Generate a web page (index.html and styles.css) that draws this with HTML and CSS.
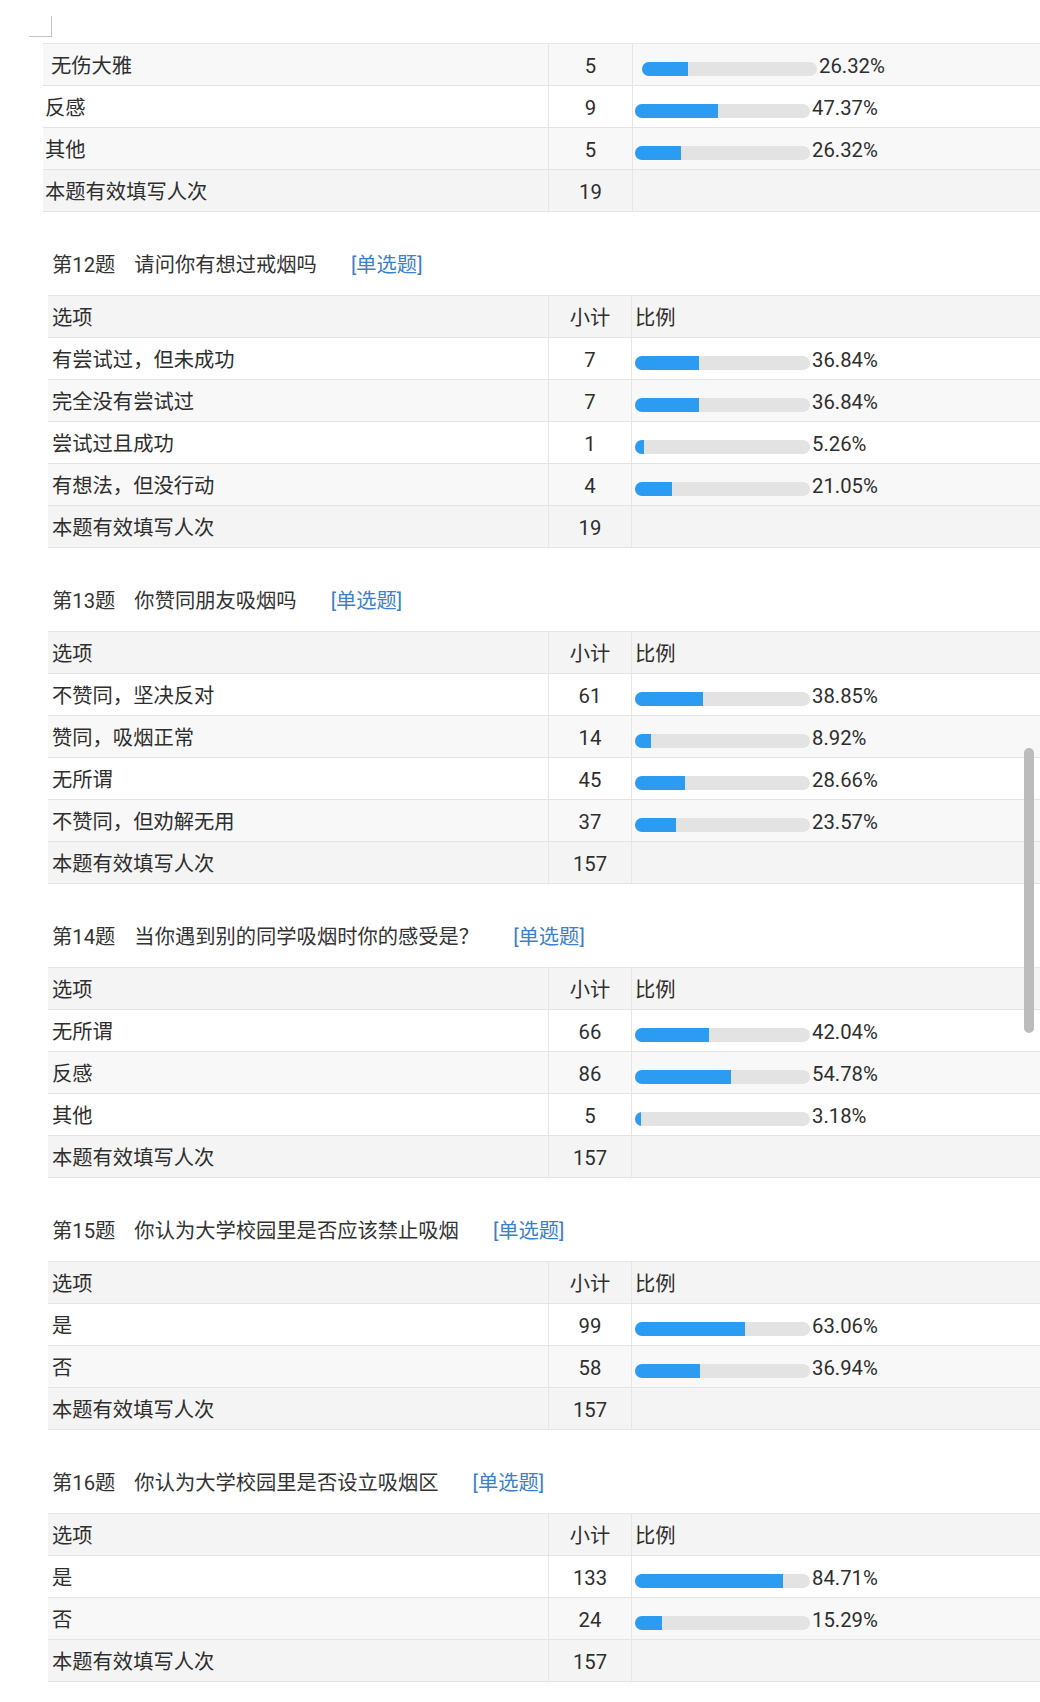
FILE: index.html
```html
<!DOCTYPE html>
<html lang="zh-CN">
<head>
<meta charset="utf-8">
<title>统计结果</title>
<link rel="stylesheet" href="styles.css">
</head>
<body>
<div class="page">
  <div class="corner"></div>

  <div class="stat stat--lead">
    <div class="row row--alt">
      <div class="cell opt opt--shift">无伤大雅</div>
      <div class="cell num">5</div>
      <div class="cell ratio ratio--shift"><span class="bar"><span class="fill" style="width:26.32%"></span></span><span class="pct">26.32%</span></div>
    </div>
    <div class="row">
      <div class="cell opt">反感</div>
      <div class="cell num">9</div>
      <div class="cell ratio"><span class="bar"><span class="fill" style="width:47.37%"></span></span><span class="pct">47.37%</span></div>
    </div>
    <div class="row row--alt">
      <div class="cell opt">其他</div>
      <div class="cell num">5</div>
      <div class="cell ratio"><span class="bar"><span class="fill" style="width:26.32%"></span></span><span class="pct">26.32%</span></div>
    </div>
    <div class="row row--total">
      <div class="cell opt">本题有效填写人次</div>
      <div class="cell num">19</div>
      <div class="cell ratio"></div>
    </div>
  </div>

  <section class="question">
    <h2 class="q-title"><span class="q-no">第12题</span><span class="q-text">请问你有想过戒烟吗</span><span class="q-tag">[单选题]</span></h2>
    <div class="stat">
      <div class="row row--head"><div class="cell opt">选项</div><div class="cell num">小计</div><div class="cell ratio">比例</div></div>
      <div class="row"><div class="cell opt">有尝试过，但未成功</div><div class="cell num">7</div><div class="cell ratio"><span class="bar"><span class="fill" style="width:36.84%"></span></span><span class="pct">36.84%</span></div></div>
      <div class="row row--alt"><div class="cell opt">完全没有尝试过</div><div class="cell num">7</div><div class="cell ratio"><span class="bar"><span class="fill" style="width:36.84%"></span></span><span class="pct">36.84%</span></div></div>
      <div class="row"><div class="cell opt">尝试过且成功</div><div class="cell num">1</div><div class="cell ratio"><span class="bar"><span class="fill" style="width:5.26%"></span></span><span class="pct">5.26%</span></div></div>
      <div class="row row--alt"><div class="cell opt">有想法，但没行动</div><div class="cell num">4</div><div class="cell ratio"><span class="bar"><span class="fill" style="width:21.05%"></span></span><span class="pct">21.05%</span></div></div>
      <div class="row row--total"><div class="cell opt">本题有效填写人次</div><div class="cell num">19</div><div class="cell ratio"></div></div>
    </div>
  </section>

  <section class="question">
    <h2 class="q-title"><span class="q-no">第13题</span><span class="q-text">你赞同朋友吸烟吗</span><span class="q-tag">[单选题]</span></h2>
    <div class="stat">
      <div class="row row--head"><div class="cell opt">选项</div><div class="cell num">小计</div><div class="cell ratio">比例</div></div>
      <div class="row"><div class="cell opt">不赞同，坚决反对</div><div class="cell num">61</div><div class="cell ratio"><span class="bar"><span class="fill" style="width:38.85%"></span></span><span class="pct">38.85%</span></div></div>
      <div class="row row--alt"><div class="cell opt">赞同，吸烟正常</div><div class="cell num">14</div><div class="cell ratio"><span class="bar"><span class="fill" style="width:8.92%"></span></span><span class="pct">8.92%</span></div></div>
      <div class="row"><div class="cell opt">无所谓</div><div class="cell num">45</div><div class="cell ratio"><span class="bar"><span class="fill" style="width:28.66%"></span></span><span class="pct">28.66%</span></div></div>
      <div class="row row--alt"><div class="cell opt">不赞同，但劝解无用</div><div class="cell num">37</div><div class="cell ratio"><span class="bar"><span class="fill" style="width:23.57%"></span></span><span class="pct">23.57%</span></div></div>
      <div class="row row--total"><div class="cell opt">本题有效填写人次</div><div class="cell num">157</div><div class="cell ratio"></div></div>
    </div>
  </section>

  <section class="question">
    <h2 class="q-title"><span class="q-no">第14题</span><span class="q-text">当你遇到别的同学吸烟时你的感受是？</span><span class="q-tag">[单选题]</span></h2>
    <div class="stat">
      <div class="row row--head"><div class="cell opt">选项</div><div class="cell num">小计</div><div class="cell ratio">比例</div></div>
      <div class="row"><div class="cell opt">无所谓</div><div class="cell num">66</div><div class="cell ratio"><span class="bar"><span class="fill" style="width:42.04%"></span></span><span class="pct">42.04%</span></div></div>
      <div class="row row--alt"><div class="cell opt">反感</div><div class="cell num">86</div><div class="cell ratio"><span class="bar"><span class="fill" style="width:54.78%"></span></span><span class="pct">54.78%</span></div></div>
      <div class="row"><div class="cell opt">其他</div><div class="cell num">5</div><div class="cell ratio"><span class="bar"><span class="fill" style="width:3.18%"></span></span><span class="pct">3.18%</span></div></div>
      <div class="row row--total"><div class="cell opt">本题有效填写人次</div><div class="cell num">157</div><div class="cell ratio"></div></div>
    </div>
  </section>

  <section class="question">
    <h2 class="q-title"><span class="q-no">第15题</span><span class="q-text">你认为大学校园里是否应该禁止吸烟</span><span class="q-tag">[单选题]</span></h2>
    <div class="stat">
      <div class="row row--head"><div class="cell opt">选项</div><div class="cell num">小计</div><div class="cell ratio">比例</div></div>
      <div class="row"><div class="cell opt">是</div><div class="cell num">99</div><div class="cell ratio"><span class="bar"><span class="fill" style="width:63.06%"></span></span><span class="pct">63.06%</span></div></div>
      <div class="row row--alt"><div class="cell opt">否</div><div class="cell num">58</div><div class="cell ratio"><span class="bar"><span class="fill" style="width:36.94%"></span></span><span class="pct">36.94%</span></div></div>
      <div class="row row--total"><div class="cell opt">本题有效填写人次</div><div class="cell num">157</div><div class="cell ratio"></div></div>
    </div>
  </section>

  <section class="question">
    <h2 class="q-title"><span class="q-no">第16题</span><span class="q-text">你认为大学校园里是否设立吸烟区</span><span class="q-tag">[单选题]</span></h2>
    <div class="stat">
      <div class="row row--head"><div class="cell opt">选项</div><div class="cell num">小计</div><div class="cell ratio">比例</div></div>
      <div class="row"><div class="cell opt">是</div><div class="cell num">133</div><div class="cell ratio"><span class="bar"><span class="fill" style="width:84.71%"></span></span><span class="pct">84.71%</span></div></div>
      <div class="row row--alt"><div class="cell opt">否</div><div class="cell num">24</div><div class="cell ratio"><span class="bar"><span class="fill" style="width:15.29%"></span></span><span class="pct">15.29%</span></div></div>
      <div class="row row--total"><div class="cell opt">本题有效填写人次</div><div class="cell num">157</div><div class="cell ratio"></div></div>
    </div>
  </section>

  <div class="scrollbar"></div>
</div>
</body>
</html>
```

FILE: styles.css
```css
html, body {
  margin: 0;
  padding: 0;
  background: #ffffff;
}

body {
  font-family: Roboto, "Noto Sans CJK SC", "Noto Sans", sans-serif;
  font-size: 20.3px;
  color: #2e2e2e;
  overflow: hidden;
}

.page {
  position: relative;
  padding-top: 16px;
  padding-bottom: 20px;
}

.corner {
  margin-left: 29px;
  width: 22px;
  height: 20px;
  border-right: 1px solid #c4c4c4;
  border-bottom: 1px solid #c4c4c4;
}

.stat {
  margin-left: 48px;
  border-top: 1px solid #e6e6e6;
}

.stat--lead {
  margin-left: 43px;
  margin-top: 6px;
}

.row {
  display: grid;
  grid-template-columns: 501px 83px 1fr;
  height: 42px;
  box-sizing: border-box;
  border-bottom: 1px solid #e4e4e4;
  background: #ffffff;
}

.stat--lead .row {
  grid-template-columns: 506px 84px 1fr;
}

.row--alt {
  background: #f8f8f8;
}

.row--head,
.row--total {
  background: #f4f4f4;
}

.cell {
  display: flex;
  align-items: center;
  min-width: 0;
  white-space: nowrap;
  line-height: 24px;
  padding-top: 2px;
}

.opt {
  padding-left: 4px;
  border-right: 1px solid #e6e6e6;
}

.stat--lead .opt {
  padding-left: 2px;
}

.stat--lead .opt--shift {
  padding-left: 8px;
}

.num {
  justify-content: center;
  border-right: 1px solid #e6e6e6;
}

.ratio {
  padding-left: 3px;
}

.stat--lead .ratio {
  padding-left: 2px;
}

.stat--lead .ratio--shift {
  padding-left: 9px;
}

.bar {
  display: block;
  flex: 0 0 175px;
  width: 175px;
  height: 14px;
  margin-top: 6px;
  border-radius: 7px;
  background: #e3e3e3;
  overflow: hidden;
}

.fill {
  display: block;
  height: 100%;
  background: #2b9cf2;
}

.pct {
  margin-left: 2px;
}

.question {
  margin-top: 39px;
}

.q-title {
  margin: 0 0 18px 52px;
  height: 26px;
  line-height: 26px;
  padding-top: 1px;
  box-sizing: border-box;
  font-size: 20.3px;
  font-weight: normal;
  color: #333333;
  white-space: nowrap;
}

.q-text {
  margin-left: 19px;
}

.q-tag {
  margin-left: 34px;
  color: #3d80c8;
}

.scrollbar {
  position: absolute;
  left: 1024px;
  top: 748px;
  width: 10px;
  height: 285px;
  border-radius: 5px;
  background: #bcbcbc;
}
```
